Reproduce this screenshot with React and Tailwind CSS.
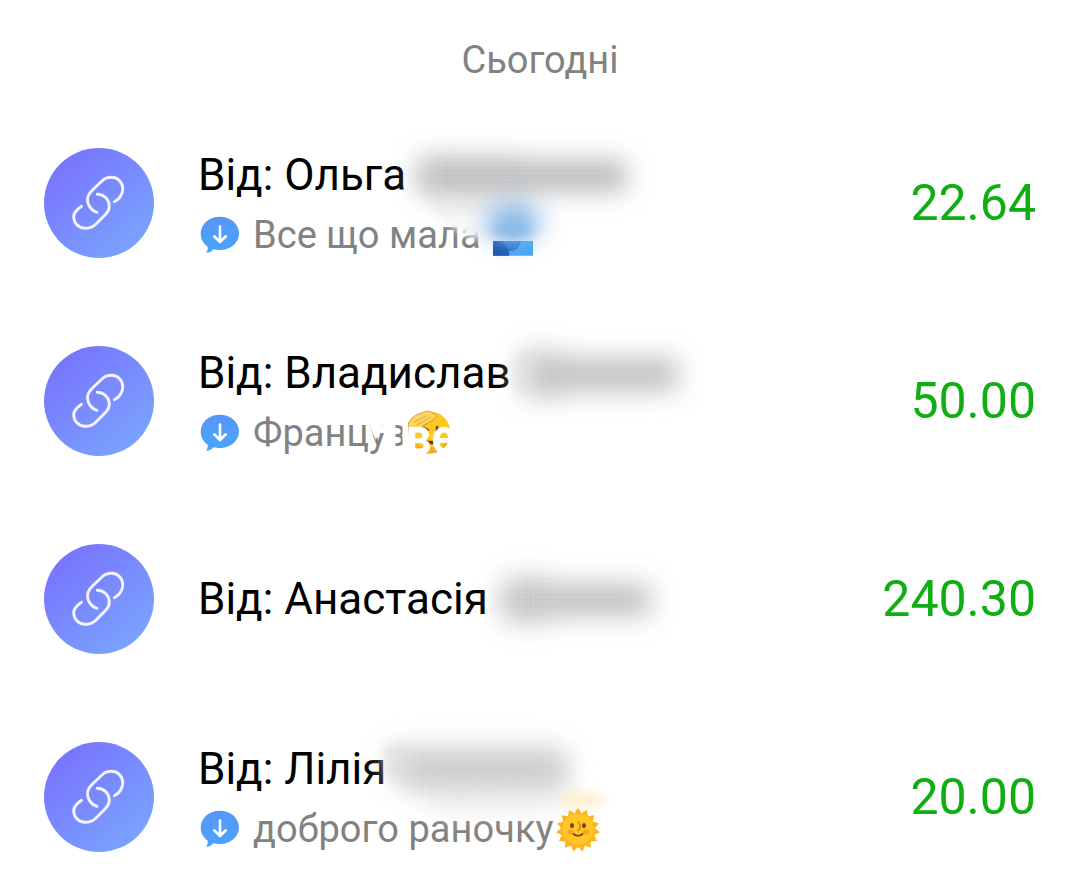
const LinkIcon = () => (
  <svg viewBox="0 0 110 110" className="size-[110px] shrink-0">
    <defs>
      <linearGradient id="disc" x1="0.15" y1="0.1" x2="0.85" y2="0.9">
        <stop offset="0" stopColor="#7874fd" />
        <stop offset="1" stopColor="#7aa3fe" />
      </linearGradient>
    </defs>
    <circle cx="55" cy="55" r="55" fill="url(#disc)" />
    <g fill="none" stroke="#f4f2ff" strokeWidth="2.900" strokeLinecap="round">
      <path d="M53 64.300C45 62 41 52.500 45.500 45.500C46.500 44 47.500 43.200 48.500 42L58 33C61 30 64.500 29.300 67.700 29.300C74 29.300 78.800 34.500 78.800 41C78.800 46.500 75 51.500 70.300 53.700" />
      <path d="M53.300 46.300C60 46.300 65.300 51.500 65.300 58C65.300 61.500 64 64 61.500 66.500L51.500 76.500C48.500 79.500 45 80.300 41 80.300C34.500 80.300 29.700 75 29.700 68.500C29.700 64.500 33 61.500 37.500 58.300" />
    </g>
  </svg>
);

const Bubble = () => (
  <svg viewBox="0 0 41 40" className="h-10 w-[41px] shrink-0 overflow-visible">
    <defs>
      <linearGradient id="bubble" x1="0" y1="0" x2="0" y2="1">
        <stop offset="0" stopColor="#5796f8" />
        <stop offset="1" stopColor="#48a4fd" />
      </linearGradient>
    </defs>
    <path d="M21.800 1.700C32.500 1.700 41 9.100 41 18.400S32.500 35 21.800 35C19.500 35 17.500 34.800 15.500 34.200C13.500 36.400 11.300 37.600 9 37.800C8.300 37.800 8.200 37.400 8.600 36.900C9.800 35.300 9.900 33.600 9.500 31.500C5.300 28.500 2.700 23.900 2.700 18.400C2.700 9.100 11.200 1.700 21.800 1.700Z" fill="url(#bubble)" />
    <path d="M22 11.500V26.500M16.200 21.300L22 27L27.800 21.300" fill="none" stroke="#fff" strokeWidth="2.600" strokeLinecap="round" strokeLinejoin="round" />
  </svg>
);

const Smudge = ({ id, children, cover }) => (
  <svg viewBox="0 0 1080 198" className="pointer-events-none absolute inset-0 h-[198px] w-[1080px] overflow-visible">
    <defs>
      <filter id={`${id}-soft`} x="-50%" y="-150%" width="200%" height="400%" colorInterpolationFilters="sRGB">
        <feGaussianBlur stdDeviation="13 12" />
      </filter>
      <filter id={`${id}-edge`} x="-50%" y="-150%" width="200%" height="400%" colorInterpolationFilters="sRGB">
        <feGaussianBlur stdDeviation="5" />
      </filter>
      <pattern id={`${id}-weave`} width="4" height="4" patternUnits="userSpaceOnUse">
        <path d="M0 .5H4M.5 0V4" stroke="#fff" strokeOpacity=".07" />
      </pattern>
    </defs>
    {children}
    <path d={cover} fill={`url(#${id}-weave)`} />
  </svg>
);

const OlhaSmudge = () => (
  <Smudge id="olha" cover="M415 45H630V98H430Z">
    <path d="M420 76L520 76L534 118L488 135L462 128L434 108Z" fill="#f6f6f6" filter="url(#olha-edge)" />
    <path d="M452 110L492 106L492 130L466 129Z" fill="#fafafa" filter="url(#olha-edge)" />
    <path d="M420 48L520 50L530 100L440 106L422 90Z" fill="#ececec" filter="url(#olha-soft)" />
    <path d="M418 56H626V88H420Z" fill="#bababa" filter="url(#olha-soft)" />
    <path d="M493 137H533V151.700H493Z" fill="#42a4f6" />
    <path d="M493 137H521C519 144 515 147 509 147V151.700H493Z" fill="#164fae" />
    <path d="M509 147C515 147 519 144 521 137H503Z" fill="#2372c9" />
    <ellipse cx="513" cy="118" rx="28" ry="20" fill="#8bbbe8" filter="url(#olha-soft)" />
    <ellipse cx="513" cy="127" rx="20" ry="9" fill="#7db2e6" fillOpacity=".6" filter="url(#olha-edge)" />
  </Smudge>
);

const VladyslavSmudge = () => (
  <Smudge id="vlad" cover="M514 45H675V98H514Z">
    <path d="M520 44H560L570 100H520Z" fill="#eaeaea" filter="url(#vlad-soft)" />
    <path d="M524 55H677V90H530Z" fill="#c2c2c2" filter="url(#vlad-soft)" />
    <path d="M515 52H534V88H515Z" fill="#dedede" fillOpacity=".5" filter="url(#vlad-edge)" />
    <g>
      <circle cx="429.500" cy="130.500" r="21" fill="#fbc922" />
      <path d="M409.500 137A21 21 0 0 0 449.500 137C443 147 420 149 409.500 137Z" fill="#f0ae1d" />
      <path d="M423 140.500H436" fill="none" stroke="#65380c" strokeWidth="3.500" />
      <path d="M424 126L428 128M437 125V129" stroke="#754710" strokeWidth="2.500" strokeLinecap="round" />
      <path d="M408.500 128C406 120 413 113 422 111C427 108 431 109 433 112C438 112 437 115 433 118L425 123C421 128 412 130 408.500 128Z" fill="#ffd463" stroke="#dc9a22" strokeWidth="1" />
      <path d="M414 120L426 114M417 123L431 115M422 124L433 118" stroke="#e2a42b" strokeWidth="1" strokeLinecap="round" />
    </g>
    <text x="406" y="151.500" fill="#fff" fontFamily="Roboto, sans-serif" fontSize="50" fontWeight="700" textLength="50" lengthAdjust="spacingAndGlyphs">ве</text>
    <path d="M368 119L373 117L378 128H380L384 122L388 117H395.500V151H391L386 131H378L376 138L372 130ZM402.500 117H408V151H402.500Z" fill="#fff" />
  </Smudge>
);

const AnastasiiaSmudge = () => (
  <Smudge id="anast" cover="M498 72H655V128H498Z">
    <path d="M506 72H550V128H506Z" fill="#eaeaea" filter="url(#anast-soft)" />
    <path d="M503 83H650V117H503Z" fill="#c2c2c2" filter="url(#anast-soft)" />
  </Smudge>
);

const rays = Array.from({ length: 30 }, (_, i) => {
  const angle = (i * Math.PI) / 15 - Math.PI / 2;
  const radius = i % 2 ? 17 : 22;
  return `${578 + radius * Math.cos(angle)},${132 + radius * Math.sin(angle)}`;
}).join(" ");

const LiliiaSmudge = () => (
  <Smudge id="lilia" cover="M390 40H565V112H425L390 90Z">
    <path d="M388 44L560 44L562 108L440 112L392 84Z" fill="#e9e9e9" filter="url(#lilia-soft)" />
    <path d="M396 57H566V86H406Z" fill="#c8c8c8" filter="url(#lilia-soft)" />
    <path d="M384 48H408V82H390Z" fill="#dcdcdc" fillOpacity=".6" filter="url(#lilia-edge)" />
    <ellipse cx="582" cy="102" rx="24" ry="9" fill="#ffe9bb" fillOpacity=".65" filter="url(#lilia-edge)" />
    <polygon points={rays} fill="#fcb51c" />
    <circle cx="578" cy="131" r="15.500" fill="#ffc825" />
    <ellipse cx="570.500" cy="134" rx="3.500" ry="2.500" fill="#ffa026" />
    <ellipse cx="586" cy="134" rx="3.500" ry="2.500" fill="#ffa026" />
    <ellipse cx="572" cy="127.500" rx="2" ry="2.500" fill="#6b4123" />
    <ellipse cx="584" cy="127.500" rx="2" ry="2.500" fill="#6b4123" />
    <path d="M578.500 124C581.500 129 580.500 132 577.500 132.500" fill="none" stroke="#e87518" strokeWidth="1.400" strokeLinecap="round" />
    <path d="M573.500 136Q578 139.500 582.500 136" fill="none" stroke="#743f18" strokeWidth="1.700" strokeLinecap="round" />
  </Smudge>
);

const rows = [
  { name: "Від: Ольга", note: "Все що мала", amount: "22.64", Overlay: OlhaSmudge },
  { name: "Від: Владислав", note: "Француз", amount: "50.00", Overlay: VladyslavSmudge },
  { name: "Від: Анастасія", amount: "240.30", Overlay: AnastasiiaSmudge },
  { name: "Від: Лілія", note: "доброго раночку", amount: "20.00", Overlay: LiliiaSmudge },
];

export default function App() {
  return (
    <main className="h-[872px] w-[1080px] overflow-hidden bg-white font-['Roboto',sans-serif]">
      <h1 className="h-[104px] pt-[38px] text-center text-[38px] leading-[44px] text-[#828282]">Сьогодні</h1>
      {rows.map(({ name, note, amount, Overlay }) => (
        <section key={name} className="relative flex h-[198px] items-center px-11">
          <LinkIcon />
          <div className="ml-11 flex flex-1 flex-col">
            <p className={note ? "pt-1 text-[44px] leading-[60px] text-black" : "text-[44px] leading-[60px] text-black"}>{name}</p>
            {note && (
              <p className="flex h-[60px] items-center gap-3.5 text-[38px] tracking-[0.05px] text-[#828282]">
                <Bubble />
                <span>{note}</span>
              </p>
            )}
          </div>
          <span className="text-[50px] text-[#0fae12]">{amount}</span>
          <Overlay />
        </section>
      ))}
    </main>
  );
}
